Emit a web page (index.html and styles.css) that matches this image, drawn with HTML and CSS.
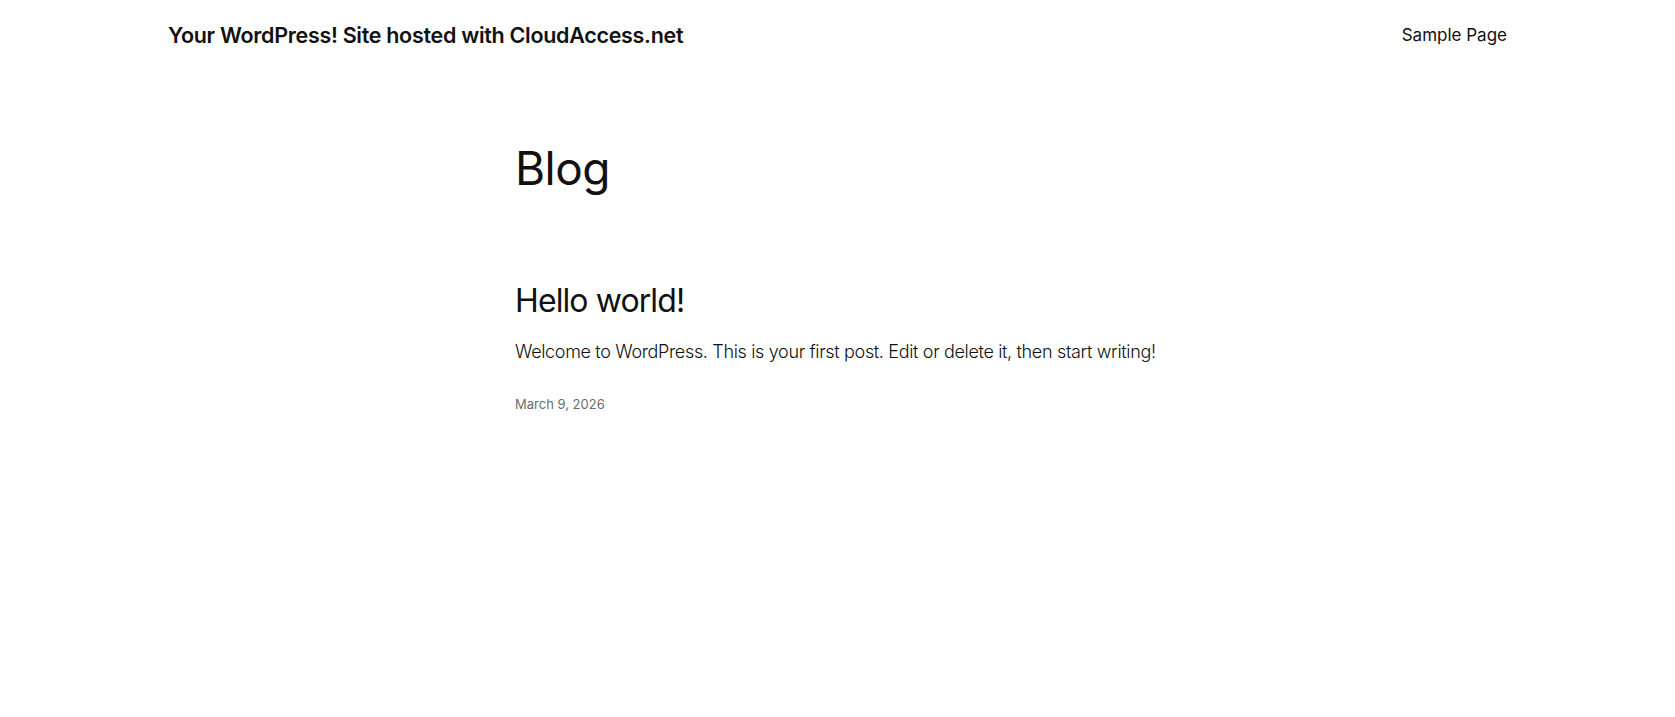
FILE: index.html
```html
<!DOCTYPE html>
<html lang="en">
<head>
<meta charset="utf-8">
<title>Blog – Your WordPress! Site hosted with CloudAccess.net</title>
<link rel="stylesheet" href="styles.css">
</head>
<body>
<header class="site-header">
  <div class="header-inner">
    <a class="site-title" href="#">Your WordPress! Site hosted with CloudAccess.net</a>
    <nav class="site-nav">
      <a class="nav-link" href="#">Sample Page</a>
    </nav>
  </div>
</header>
<main class="site-main">
  <div class="content">
    <h1 class="page-title">Blog</h1>
    <article class="post">
      <h2 class="post-title"><a href="#">Hello world!</a></h2>
      <p class="post-excerpt">Welcome to WordPress. This is your first post. Edit or delete it, then start writing!</p>
      <div class="post-date">March 9, 2026</div>
    </article>
  </div>
</main>
</body>
</html>
```
FILE: styles.css
```css
* { box-sizing: border-box; }
html, body { margin: 0; padding: 0; background: #ffffff; }
body {
  font-family: Inter, "Noto Sans", "Liberation Sans", sans-serif;
  color: #111111;
  -webkit-font-smoothing: antialiased;
}
a { color: inherit; text-decoration: none; }

.site-header { height: 70px; }
.header-inner {
  width: 1339px;
  height: 100%;
  margin: 0 auto;
  display: flex;
  align-items: center;
  justify-content: space-between;
}
.site-title {
  font-size: 21.5px;
  line-height: 30px;
  font-weight: 600;
  letter-spacing: -0.3px;
}
.nav-link {
  font-size: 17px;
  line-height: 26px;
  font-weight: 400;
}

.content {
  width: 645px;
  margin: 0 auto;
}
.page-title {
  margin: 71px 0 0;
  font-size: 46px;
  line-height: 55px;
  font-weight: 400;
  letter-spacing: -0.5px;
}
.post { margin-top: 85px; }
.post-title {
  margin: 0;
  font-size: 32px;
  line-height: 40px;
  font-weight: 400;
  letter-spacing: -0.9px;
}
.post-excerpt {
  margin: 17px 0 0;
  font-size: 18px;
  line-height: 28px;
  font-weight: 300;
  letter-spacing: -0.34px;
}
.post-date {
  margin-top: 28px;
  font-size: 13px;
  line-height: 20px;
  color: #6b6b6b;
}
```
